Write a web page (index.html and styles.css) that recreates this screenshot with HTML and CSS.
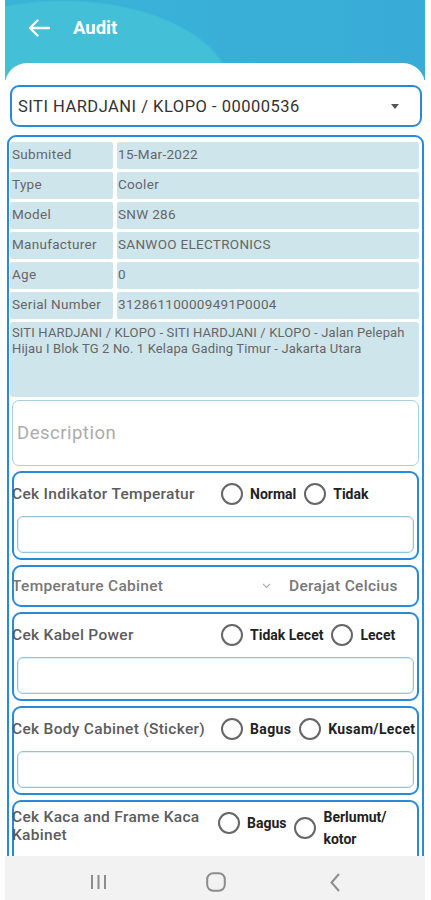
FILE: index.html
```html
<!DOCTYPE html>
<html lang="id">
<head>
<meta charset="utf-8">
<title>Audit</title>
<link rel="stylesheet" href="styles.css">
</head>
<body>
<div class="app">
  <header class="header">
    <svg class="back" width="22" height="18" viewBox="0 0 22 18"><path d="M21 9H2M9.5 1.5L2 9l7.5 7.5" fill="none" stroke="#fff" stroke-width="2.4" stroke-linecap="round" stroke-linejoin="round"/></svg>
    <h1 class="title">Audit</h1>
  </header>
  <main class="card">
    <div class="select"><span>SITI HARDJANI / KLOPO - 00000536</span><span class="caret"></span></div>
    <div class="panel">
      <div class="info">
        <div class="k">Submited</div><div class="v">15-Mar-2022</div>
        <div class="k">Type</div><div class="v">Cooler</div>
        <div class="k">Model</div><div class="v">SNW 286</div>
        <div class="k">Manufacturer</div><div class="v">SANWOO ELECTRONICS</div>
        <div class="k">Age</div><div class="v">0</div>
        <div class="k">Serial Number</div><div class="v">312861100009491P0004</div>
      </div>
      <div class="addr">SITI HARDJANI / KLOPO - SITI HARDJANI / KLOPO - Jalan Pelepah Hijau I Blok TG 2 No. 1 Kelapa Gading Timur - Jakarta Utara</div>
      <div class="desc">Description</div>

      <div class="check">
        <div class="check-row">
          <div class="check-label">Cek Indikator Temperatur</div>
          <div class="opts">
            <div class="opt"><span class="radio"></span><span class="opt-text">Normal</span></div>
            <div class="opt"><span class="radio"></span><span class="opt-text">Tidak</span></div>
          </div>
        </div>
        <div class="field"></div>
      </div>

      <div class="temp">
        <span class="temp-label">Temperature Cabinet</span>
        <svg class="chev" width="9" height="6" viewBox="0 0 9 6"><path d="M1 1l3.5 3.5L8 1" fill="none" stroke="#b0b0b0" stroke-width="1.2"/></svg>
        <span class="temp-unit">Derajat Celcius</span>
      </div>

      <div class="check">
        <div class="check-row">
          <div class="check-label">Cek Kabel Power</div>
          <div class="opts">
            <div class="opt"><span class="radio"></span><span class="opt-text">Tidak Lecet</span></div>
            <div class="opt"><span class="radio"></span><span class="opt-text">Lecet</span></div>
          </div>
        </div>
        <div class="field"></div>
      </div>

      <div class="check">
        <div class="check-row">
          <div class="check-label">Cek Body Cabinet (Sticker)</div>
          <div class="opts">
            <div class="opt"><span class="radio"></span><span class="opt-text wide">Bagus</span></div>
            <div class="opt"><span class="radio"></span><span class="opt-text wide">Kusam/Lecet</span></div>
          </div>
        </div>
        <div class="field"></div>
      </div>

      <div class="check">
        <div class="check-row top">
          <div class="check-label two">Cek Kaca and Frame Kaca Kabinet</div>
          <div class="opts top">
            <div class="opt"><span class="radio"></span><span class="opt-text">Bagus</span></div>
            <div class="opt wrap"><span class="radio"></span><span class="opt-text">Berlumut/<br>kotor</span></div>
          </div>
        </div>
        <div class="field"></div>
      </div>
    </div>
  </main>
  <nav class="navbar">
    <svg width="17" height="16" viewBox="0 0 17 16"><path d="M2 1v14M8.5 1v14M15 1v14" stroke="#8c8c8c" stroke-width="2"/></svg>
    <svg width="20" height="20" viewBox="0 0 20 20"><rect x="1.2" y="1.2" width="17.6" height="17.6" rx="6" fill="none" stroke="#8c8c8c" stroke-width="2"/></svg>
    <svg width="10" height="19" viewBox="0 0 10 19"><path d="M9 1L1.5 9.5 9 18" fill="none" stroke="#8c8c8c" stroke-width="2"/></svg>
  </nav>
</div>
</body>
</html>
```

FILE: styles.css
```css
* { box-sizing: border-box; }
html, body { margin: 0; padding: 0; background: #fff; }
body { font-family: Roboto, "Liberation Sans", Arial, sans-serif; }

.app {
  margin: 0 6px 0 5px;
  width: 420px;
  height: 900px;
  display: flex;
  flex-direction: column;
  overflow: hidden;
}

.header {
  height: 80px;
  flex: none;
  display: flex;
  align-items: flex-start;
  padding: 16px 0 0 23px;
  background:
    radial-gradient(ellipse 170px 92px at 58px 92px, #43bfd7 0 98%, rgba(67,191,215,0) 100%),
    linear-gradient(90deg, #3ab3d8, #38acd6);
}
.back { margin-top: 3px; }
.title {
  margin: 0 0 0 23px;
  font-size: 18.5px;
  font-weight: 700;
  line-height: 24px;
  color: #fff;
}

.card {
  flex: 1;
  min-height: 0;
  margin-top: -17px;
  background: #fff;
  border-radius: 22px 22px 0 0;
  overflow: hidden;
  position: relative;
}

.select {
  margin: 22px 3px 0 5px;
  height: 42px;
  border: 2px solid #2a8ad8;
  border-radius: 9px;
  display: flex;
  align-items: center;
  justify-content: space-between;
  padding: 0 21px 0 6px;
  font-size: 16.5px;
  letter-spacing: 0.5px;
  color: #333;
}
.caret {
  width: 0; height: 0;
  border-left: 4px solid transparent;
  border-right: 4px solid transparent;
  border-top: 5px solid #555;
}

.panel {
  margin: 8px 1px 0 2px;
  border: 2px solid #2a8ad8;
  border-radius: 9px;
  padding: 5px 3px 40px 1px;
}

.info {
  display: grid;
  grid-template-columns: 103px 1fr;
  column-gap: 4px;
  row-gap: 3px;
}
.info .k, .info .v {
  height: 27px;
  line-height: 25px;
  background: #cfe5ec;
  border-radius: 2px;
  font-size: 13.5px;
  letter-spacing: 0.3px;
  color: #666;
  white-space: nowrap;
}
.info .k { padding-left: 2px; }
.info .v { padding-left: 1px; }

.addr {
  margin-top: 3px;
  height: 75px;
  background: #cfe5ec;
  border-radius: 3px;
  padding: 3px 2px;
  font-size: 13px;
  letter-spacing: 0.15px;
  line-height: 15.5px;
  color: #666;
}

.desc {
  margin: 3px 0 5px 2px;
  height: 66px;
  border: 1px solid #a7cfe1;
  border-radius: 7px;
  padding-left: 4px;
  font-size: 18.5px;
  letter-spacing: 0.5px;
  line-height: 64px;
  color: #acacac;
}

.check {
  margin: 0 0 5px 2px;
  border: 2px solid #2a8ad8;
  border-radius: 9px;
  padding: 0 3px 5px 3px;
}
.check-row {
  margin-top: 6px;
  min-height: 30px;
  display: flex;
  align-items: center;
}
.check-row.top { align-items: flex-start; }
.check-label {
  margin-left: -5px;
  width: 207px;
  flex: none;
  font-size: 15.5px;
  letter-spacing: 0.3px;
  font-weight: 500;
  color: #5c5c5c;
  line-height: 18px;
}
.opts {
  margin-left: 2px;
  display: flex;
  align-items: center;
  gap: 8px;
}
.opts.top { align-items: flex-start; margin-top: 4px; margin-left: -1px; }
.opt {
  display: flex;
  align-items: center;
  gap: 7px;
  white-space: nowrap;
}
.opt.wrap { align-items: flex-start; margin-top: -6px; }
.opt.wrap .radio { margin-top: 11px; }
.opt.wrap .opt-text { line-height: 22px; }
.radio {
  width: 22px;
  height: 22px;
  flex: none;
  border: 2px solid #666;
  border-radius: 50%;
  background: #fff;
}
.opt-text {
  font-size: 14px;
  font-weight: 700;
  color: #222;
}
.opt-text.wide { letter-spacing: 0.35px; }

.field {
  margin-top: 7px;
  height: 37px;
  border: 1px solid #8fc4dc;
  border-radius: 6px;
  box-shadow: inset 0 0 0 1px #e2f0f6;
}

.temp {
  margin: 0 0 5px 2px;
  height: 42px;
  border: 2px solid #2a8ad8;
  border-radius: 9px;
  display: flex;
  align-items: center;
  font-size: 15.5px;
  letter-spacing: 0.3px;
  font-weight: 500;
  color: #777;
  white-space: nowrap;
}
.temp-label { margin-left: -2px; width: 250px; flex: none; }
.chev { flex: none; margin-right: 18px; }

.navbar {
  flex: none;
  height: 44px;
  background: #f2f2f2;
  display: flex;
  align-items: center;
  padding: 8px 0 0 85px;
}
.navbar svg:nth-child(2) { margin-left: 99px; }
.navbar svg:nth-child(3) { margin-left: 104px; }
```
